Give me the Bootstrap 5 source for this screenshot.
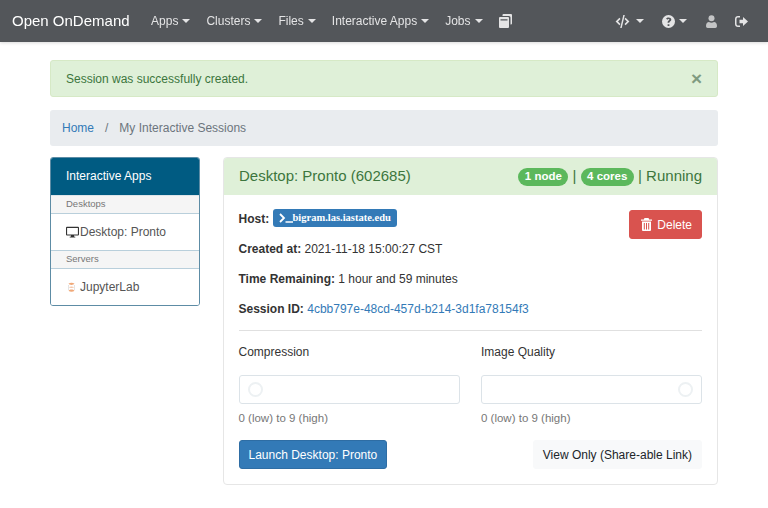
<!DOCTYPE html>
<html lang="en">
<head>
  <meta charset="UTF-8">
  <meta name="viewport" content="width=device-width, initial-scale=1.0">
  <title>Open OnDemand - My Interactive Sessions</title>
  <link href="https://cdn.jsdelivr.net/npm/bootstrap@5.3.0/dist/css/bootstrap.min.css" rel="stylesheet">
  <style>
    body {
      font-family: "Liberation Sans", Arial, sans-serif;
      font-size: 12px;
      line-height: 1.5;
      color: #333;
      background: #fff;
      padding-top: 60px;
    }
    a { color: #337ab7; text-decoration: none; }

    .ood-bar {
      height: 42px;
      padding: 0 12px;
      background: #53565a;
      box-shadow: 0 1px 3px rgba(0,0,0,.15);
    }
    .ood-brand { font-size: 15px; color: #fff; margin-right: 13.500px; }
    .ood-bar .nav-link { color: #e4e4e5; font-size: 12px; padding: 0 9px; line-height: 42px; }
    .ood-bar .dropdown-toggle::after { margin-left: 4px; vertical-align: 2px; border-top-width: 4px; border-left-width: 4px; border-right-width: 4px; }
    .ood-bar svg { fill: #e4e4e5; display: block; }
    .ood-bar .nav-link.ood-ico { display: flex; align-items: center; height: 42px; }
    .ood-bar .nav-link.ood-code { padding-right: 10px; }
    .ood-bar .nav-link.ood-code::after { margin-left: 6px; }
    .ood-bar .nav-link.ood-help { padding-right: 11px; }
    .ood-bar .nav-link.ood-user { padding-right: 10px; }
    .ood-bar .ood-user svg { fill: #c4c5c6; }

    .ood-page { width: 668px; margin: 0 auto; }

    .ood-alert {
      height: 37px;
      padding: 0 15px;
      margin-bottom: 13px;
      background: #dff0d8;
      border: 1px solid #d6e9c6;
      color: #3c763d;
      border-radius: 3px;
    }
    .ood-close { color: #7f9b80; font-size: 19px; font-weight: 700; line-height: 1; }

    .ood-crumbs {
      height: 36px;
      padding: 0 12px;
      margin-bottom: 11px;
      background: #e9ecef;
      border-radius: 3px;
      --bs-breadcrumb-divider-color: #6c757d;
      --bs-breadcrumb-item-active-color: #6c757d;
      --bs-breadcrumb-item-padding-x: 11px;
      --bs-breadcrumb-margin-bottom: 0;
    }

    .ood-main { gap: 23px; }
    .ood-side { width: 150px; flex: none; border: 1px solid #5d8ca5; border-radius: 3px; overflow: hidden; align-self: flex-start; }
    .ood-side-head { height: 37px; padding: 0 15px 1px; background: #005b82; color: #fff; display: flex; align-items: center; }
    .ood-side-cat { height: 19px; padding: 0 15px; font-size: 9.5px; color: #777; background: #f5f5f5; border-top: 1px solid #dde5ea; border-bottom: 1px solid #b9cfdb; display: flex; align-items: center; }
    .ood-side-item { height: 36px; padding: 0 15px; font-size: 12px; color: #555; background: #fff; display: flex; align-items: center; gap: 1px; }
    .ood-side-item + .ood-side-cat { border-top-color: #b9cfdb; }

    .ood-card { flex: 1; border: 1px solid #e6e6e6; border-radius: 4px; overflow: hidden; }
    .ood-card-head { height: 37px; padding: 0 15px; background: #dff0d8; color: #3c763d; font-size: 15px; display: flex; align-items: center; justify-content: space-between; }
    .ood-pill { display: inline-block; background: #5cb85c; color: #fff; font-size: 11.5px; font-weight: 700; line-height: 1; padding: 3px 6.500px; border-radius: 9px; vertical-align: 1px; }
    .ood-card-body { padding: 14px 15px 15px 14.500px; }
    .ood-info { margin-bottom: 10px; height: 20px; line-height: 20px; }
    .ood-host { display: inline-flex; align-items: center; height: 18px; padding: 0 6px; background: #337ab7; color: #fff; border-radius: 3px; font-family: "Liberation Serif", serif; font-weight: 700; font-size: 10.500px; vertical-align: 0; }
    .ood-delete { height: 29px; margin-top: 1px; padding: 0 9px 0 11px; background: #d9534f; color: #fff; border-color: #d9534f; font-size: 12px; border-radius: 3px; display: inline-flex; align-items: center; gap: 5px; }
    .ood-rule { margin: 1px 0 12px; border-top: 1px solid #ccc; opacity: .6; }
    .ood-grid { display: grid; grid-template-columns: 221px 221px; justify-content: space-between; }
    .ood-lbl { font-size: 12px; margin-bottom: 13px; line-height: 19px; }
    .ood-slide { height: 29px; border: 1px solid #dce3e8; border-radius: 3px; background: #fff; display: flex; align-items: center; padding: 0 8px; }
    .ood-slide span { width: 15px; height: 15px; border-radius: 50%; border: 2px solid #edf1f3; background: #fff; }
    .ood-hint { font-size: 11.500px; color: #777; margin-top: 5px; line-height: 19px; }
    .ood-launch { height: 29px; padding: 0 9px; background: #337ab7; border: 1px solid #2e6da4; color: #fff; font-size: 12px; border-radius: 3px; line-height: 1; }
    .ood-view { height: 29px; padding: 0 9px; background: #f8f9fa; border: 1px solid #f8f9fa; color: #212529; font-size: 12px; border-radius: 3px; line-height: 1; }
    .ood-actions { margin-top: 12px; }
  </style>
</head>
<body>
  <nav class="navbar navbar-expand fixed-top ood-bar">
    <a class="navbar-brand p-0 ood-brand" href="#">Open OnDemand</a>
    <ul class="navbar-nav">
      <li class="nav-item"><a class="nav-link dropdown-toggle" href="#">Apps</a></li>
      <li class="nav-item"><a class="nav-link dropdown-toggle" href="#">Clusters</a></li>
      <li class="nav-item"><a class="nav-link dropdown-toggle" href="#">Files</a></li>
      <li class="nav-item"><a class="nav-link dropdown-toggle" href="#">Interactive Apps</a></li>
      <li class="nav-item"><a class="nav-link dropdown-toggle" href="#">Jobs</a></li>
      <li class="nav-item"><a class="nav-link ood-ico" href="#">
        <svg width="13" height="14" viewBox="0 0 13 14"><path d="M4.500 0H12a1 1 0 0 1 1 1v8.500a1 1 0 0 1-1 1h-.5V3.500A1.500 1.500 0 0 0 10 2H3.500V1a1 1 0 0 1 1-1z"/><path fill-rule="evenodd" d="M1 3h8a1 1 0 0 1 1 1v9a1 1 0 0 1-1 1H1a1 1 0 0 1-1-1V4a1 1 0 0 1 1-1zM1.500 5.200v1.300h7V5.200z"/></svg>
      </a></li>
    </ul>
    <ul class="navbar-nav ms-auto">
      <li class="nav-item"><a class="nav-link ood-ico ood-code dropdown-toggle" href="#">
        <svg width="15" height="13" viewBox="0 0 15 13"><path d="M4.400 2.800 0.600 6.500l3.800 3.700 1.100-1.200-2.500-2.500 2.500-2.500zM10.600 2.800 9.500 4l2.500 2.500L9.500 9l1.100 1.200 3.800-3.700zM8.300 0 5.200 13h1.500L9.800 0z"/></svg>
      </a></li>
      <li class="nav-item"><a class="nav-link ood-ico ood-help dropdown-toggle" href="#">
        <svg width="13" height="13" viewBox="0 0 13 13"><path fill-rule="evenodd" d="M6.500 0a6.500 6.500 0 1 0 0 13 6.500 6.500 0 0 0 0-13zM5.600 9.200h1.800V11H5.600zM6.600 2.400c1.500 0 2.700.9 2.700 2.200 0 1-.6 1.500-1.200 1.900-.5.300-.7.500-.7 1v.2H5.600v-.4c0-.9.400-1.400 1-1.800.5-.3.800-.5.800-.9 0-.4-.4-.6-.8-.6-.5 0-.9.300-1.200.8L4 3.500c.6-.7 1.400-1.100 2.600-1.100z"/></svg>
      </a></li>
      <li class="nav-item"><a class="nav-link ood-ico ood-user" href="#">
        <svg width="11" height="13" viewBox="0 0 11 13"><circle cx="5.500" cy="3.200" r="3"/><path d="M0 11c0-2.800 1.300-4 3-4 .8.500 1.600.7 2.500.7S7.200 7.500 8 7c1.700 0 3 1.200 3 4 0 1.300-.7 2-1.700 2H1.700C.7 13 0 12.300 0 11z"/></svg>
      </a></li>
      <li class="nav-item"><a class="nav-link ood-ico" href="#">
        <svg width="13" height="11" viewBox="0 0 13 11"><path d="M8 1 13 5.500 8 10V7.300H4.500V3.700H8z"/><path d="M3 0h2v1.500H3c-.9 0-1.500.6-1.500 1.500v5c0 .9.600 1.500 1.500 1.500h2V11H3C1.300 11 0 9.700 0 8V3C0 1.300 1.300 0 3 0z"/></svg>
      </a></li>
    </ul>
  </nav>

  <div class="ood-page">
    <div class="ood-alert d-flex align-items-center justify-content-between">
      <span>Session was successfully created.</span>
      <span class="ood-close">&times;</span>
    </div>

    <ol class="breadcrumb ood-crumbs align-items-center">
      <li class="breadcrumb-item"><a href="#">Home</a></li>
      <li class="breadcrumb-item active">My Interactive Sessions</li>
    </ol>

    <div class="d-flex ood-main">
      <div class="ood-side">
        <div class="ood-side-head">Interactive Apps</div>
        <div class="ood-side-cat">Desktops</div>
        <a class="ood-side-item" href="#">
          <svg width="13" height="12" viewBox="0 0 13 12"><path fill="#333" fill-rule="evenodd" d="M1 .8h11a1 1 0 0 1 1 1v6.700a1 1 0 0 1-1 1H8l.3 1.200h1v.8H3.700v-.8h1l.3-1.200H1a1 1 0 0 1-1-1V1.800a1 1 0 0 1 1-1zM1.100 1.900v6.500h10.800V1.900z"/></svg>
          Desktop: Pronto
        </a>
        <div class="ood-side-cat">Servers</div>
        <a class="ood-side-item" href="#">
          <svg width="13" height="12" viewBox="0 0 13 12"><path d="M2.500 2.800c1.500-1.300 4.500-1.300 6 0-1.300 1.500-4.700 1.500-6 0zM2.500 9.700c1.500 1.300 4.500 1.300 6 0-1.300-1.500-4.700-1.500-6 0z" fill="#f0a878"/><path d="M2.800 6.200c1.300-1 4.100-1 5.400 0-1.300 1-4.100 1-5.400 0z" fill="#f5c6a8"/><path d="M2.500 4v5M8.500 4v5" stroke="#d8d8d8" stroke-width=".7"/></svg>
          JupyterLab
        </a>
      </div>

      <div class="ood-card">
        <div class="ood-card-head">
          <span>Desktop: Pronto (602685)</span>
          <span><span class="ood-pill">1 node</span> | <span class="ood-pill">4 cores</span> | Running</span>
        </div>
        <div class="ood-card-body">
          <div class="d-flex justify-content-between">
            <div>
              <div class="ood-info"><strong>Host:</strong>
                <a class="ood-host" href="#"><svg width="14" height="10" viewBox="0 0 14 10"><path d="M1 1l4 4-4 4" fill="none" stroke="#fff" stroke-width="1.800"/><path d="M6.500 8.200H14v1.500H6.500z" fill="#fff"/></svg>bigram.las.iastate.edu</a>
              </div>
              <div class="ood-info"><strong>Created at:</strong> 2021-11-18 15:00:27 CST</div>
              <div class="ood-info"><strong>Time Remaining:</strong> 1 hour and 59 minutes</div>
              <div class="ood-info"><strong>Session ID:</strong> <a href="#">4cbb797e-48cd-457d-b214-3d1fa78154f3</a></div>
            </div>
            <div>
              <button class="btn ood-delete" type="button">
                <svg width="11" height="13" viewBox="0 0 11 13"><path fill="#fff" fill-rule="evenodd" d="M3.500 0h4l.7 1.500H11v1.300H0V1.500h2.800zM1 3.500h9V12a1 1 0 0 1-1 1H2a1 1 0 0 1-1-1zM2.800 5v6.500h1V5zM5 5v6.500h1V5zM7.200 5v6.500h1V5z"/></svg>
                Delete
              </button>
            </div>
          </div>
          <hr class="ood-rule">
          <div class="ood-grid">
            <div>
              <div class="ood-lbl">Compression</div>
              <div class="ood-slide"><span></span></div>
              <div class="ood-hint">0 (low) to 9 (high)</div>
            </div>
            <div>
              <div class="ood-lbl">Image Quality</div>
              <div class="ood-slide justify-content-end"><span></span></div>
              <div class="ood-hint">0 (low) to 9 (high)</div>
            </div>
          </div>
          <div class="d-flex justify-content-between ood-actions">
            <button class="btn ood-launch" type="button">Launch Desktop: Pronto</button>
            <button class="btn ood-view" type="button">View Only (Share-able Link)</button>
          </div>
        </div>
      </div>
    </div>
  </div>

  <script src="https://cdn.jsdelivr.net/npm/bootstrap@5.3.0/dist/js/bootstrap.bundle.min.js"></script>
</body>
</html>
